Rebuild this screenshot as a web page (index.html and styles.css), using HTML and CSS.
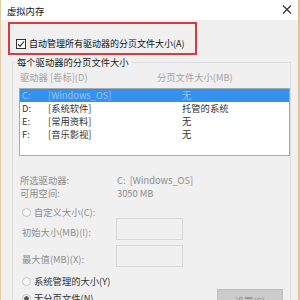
FILE: index.html
```html
<!DOCTYPE html>
<html lang="zh-CN">
<head>
    <meta charset="UTF-8">
    <meta name="viewport" content="width=device-width, initial-scale=1.0">
    <title>虚拟内存</title>
    <link rel="stylesheet" href="styles.css">
</head>
<body>
    <div class="window">
        <div class="titlebar">
            <span class="title">虚拟内存</span>
            <svg class="close" width="10" height="9" viewBox="0 0 10 9">
                <path d="M1 0.5L9 8.5M9 0.5L1 8.5" stroke="#2b2b2b" stroke-width="1.1" fill="none"/>
            </svg>
        </div>

        <div class="content">
            <label class="auto-row">
                <span class="checkbox">
                    <svg width="8" height="8" viewBox="0 0 8 8">
                        <path d="M1 4.2L3 6.3L7 1.5" stroke="#222" stroke-width="1.1" fill="none"/>
                    </svg>
                </span>
                自动管理所有驱动器的分页文件大小(A)
            </label>

            <fieldset class="group">
                <legend>每个驱动器的分页文件大小</legend>

                <div class="list-head">
                    <span class="col-drive">驱动器 [卷标](D)</span>
                    <span>分页文件大小(MB)</span>
                </div>

                <div class="list">
                    <div class="row selected">
                        <span class="col-letter">C:</span>
                        <span class="col-label">[Windows_OS]</span>
                        <span>无</span>
                    </div>
                    <div class="row">
                        <span class="col-letter">D:</span>
                        <span class="col-label">[系统软件]</span>
                        <span>托管的系统</span>
                    </div>
                    <div class="row">
                        <span class="col-letter">E:</span>
                        <span class="col-label">[常用资料]</span>
                        <span>无</span>
                    </div>
                    <div class="row">
                        <span class="col-letter">F:</span>
                        <span class="col-label">[音乐影视]</span>
                        <span>无</span>
                    </div>
                </div>

                <div class="info">
                    <div class="info-row"><span class="info-key">所选驱动器:</span><span>C:&nbsp; [Windows_OS]</span></div>
                    <div class="info-row"><span class="info-key">可用空间:</span><span>3050 MB</span></div>
                </div>

                <label class="radio-row disabled first"><span class="radio"></span>自定义大小(C):</label>
                <div class="size-row">
                    <span class="size-label">初始大小(MB)(I):</span>
                    <span class="size-input"></span>
                </div>
                <div class="size-row second">
                    <span class="size-label">最大值(MB)(X):</span>
                    <span class="size-input"></span>
                </div>
                <label class="radio-row system"><span class="radio"></span>系统管理的大小(Y)</label>
                <div class="last-row">
                    <label class="radio-row"><span class="radio checked"></span>无分页文件(N)</label>
                    <button class="set-btn" disabled>设置(S)</button>
                </div>
            </fieldset>
        </div>

        <div class="annotation"></div>
    </div>
</body>
</html>
```

FILE: styles.css
```css
html, body {
    margin: 0;
    padding: 0;
    width: 300px;
    height: 300px;
    overflow: hidden;
    background: #ffffff;
}
body {
    font-family: "Noto Sans CJK SC", "Noto Sans", sans-serif;
    font-size: 9.3px;
    color: #1e1e1e;
}
.window {
    position: relative;
    box-sizing: border-box;
    width: 300px;
    height: 320px;
    background: #f0f0f0;
    border-left: 1px solid #e3c9a6;
    border-right: 2px solid #e2bf96;
}
.titlebar {
    height: 20px;
    background: #ffffff;
    display: flex;
    align-items: center;
    justify-content: space-between;
    padding: 0 6px 0 6px;
}
.title {
    line-height: 12px;
    color: #111;
    margin-top: 1px;
}
.close {
    margin-top: -1px;
}
.content {
    padding: 0 0 0 11px;
}
.auto-row {
    display: flex;
    align-items: center;
    height: 12px;
    line-height: 12px;
    margin-top: 18px;
    padding-left: 4px;
    color: #111;
    font-size: 9px;
}
.checkbox {
    box-sizing: border-box;
    width: 10px;
    height: 10px;
    border: 1px solid #333;
    background: #fff;
    display: flex;
    align-items: center;
    justify-content: center;
    margin-right: 3px;
}
.group {
    box-sizing: border-box;
    width: 279px;
    margin: 6px 0 0 0;
    padding: 3px 0 0 6px;
    border: 1px solid #dcdcdc;
    min-width: 0;
}
.group legend {
    padding: 0 2px;
    margin-left: -4px;
    line-height: 12px;
    color: #222;
}
.list-head {
    display: flex;
    line-height: 12px;
    color: #a3a3a3;
    padding-left: 1px;
}
.col-drive {
    width: 137px;
}
.list {
    box-sizing: border-box;
    margin-top: 5px;
    height: 68px;
    border: 1px solid #a9a9a9;
    background: #ffffff;
}
.row {
    display: flex;
    height: 13px;
    line-height: 13px;
    padding-left: 2px;
    color: #333;
}
.row.selected {
    background: #3591ee;
    color: #9cc4f5;
}
.col-letter {
    width: 26px;
}
.col-label {
    width: 134px;
}
.info {
    margin-top: 18px;
    color: #8d8d8d;
    padding-left: 1px;
}
.info-row {
    display: flex;
    line-height: 13px;
}
.info-key {
    width: 97px;
}
.radio-row {
    display: flex;
    align-items: center;
    height: 12px;
    line-height: 12px;
    padding-left: 3px;
}
.radio-row.first {
    margin-top: 6px;
}
.radio-row.disabled {
    color: #8d8d8d;
}
.radio-row.system {
    margin-top: 8px;
    color: #333;
}
.radio {
    box-sizing: border-box;
    width: 9px;
    height: 9px;
    border-radius: 50%;
    border: 1px solid #c4c4c4;
    background: #f7f7f7;
    margin-right: 3px;
}
.radio.checked {
    background: radial-gradient(circle, #555 0 2px, #f7f7f7 2.5px);
}
.size-row {
    display: flex;
    height: 22px;
    padding-left: 3px;
    color: #8d8d8d;
}
.size-row.second {
    margin-top: 5px;
}
.size-label {
    width: 94px;
    line-height: 12px;
    padding-top: 8px;
}
.size-input {
    box-sizing: border-box;
    width: 67px;
    height: 22px;
    border: 1px solid #d6d6d6;
    background: #f0f0f0;
}
.last-row {
    display: flex;
    align-items: flex-start;
    margin-top: 2px;
}
.last-row .radio-row {
    margin-top: 3px;
    color: #333;
}
.set-btn {
    margin-left: auto;
    margin-right: 7px;
    width: 66px;
    height: 23px;
    border: 1px solid #bfbfbf;
    background: #cccccc;
    color: #8a8a8a;
    font-family: inherit;
    font-size: 9.3px;
    padding: 0;
}
.annotation {
    position: absolute;
    left: 7px;
    top: 22px;
    width: 189px;
    height: 33px;
    box-sizing: border-box;
    border: 2px solid #d63b3f;
}
```
